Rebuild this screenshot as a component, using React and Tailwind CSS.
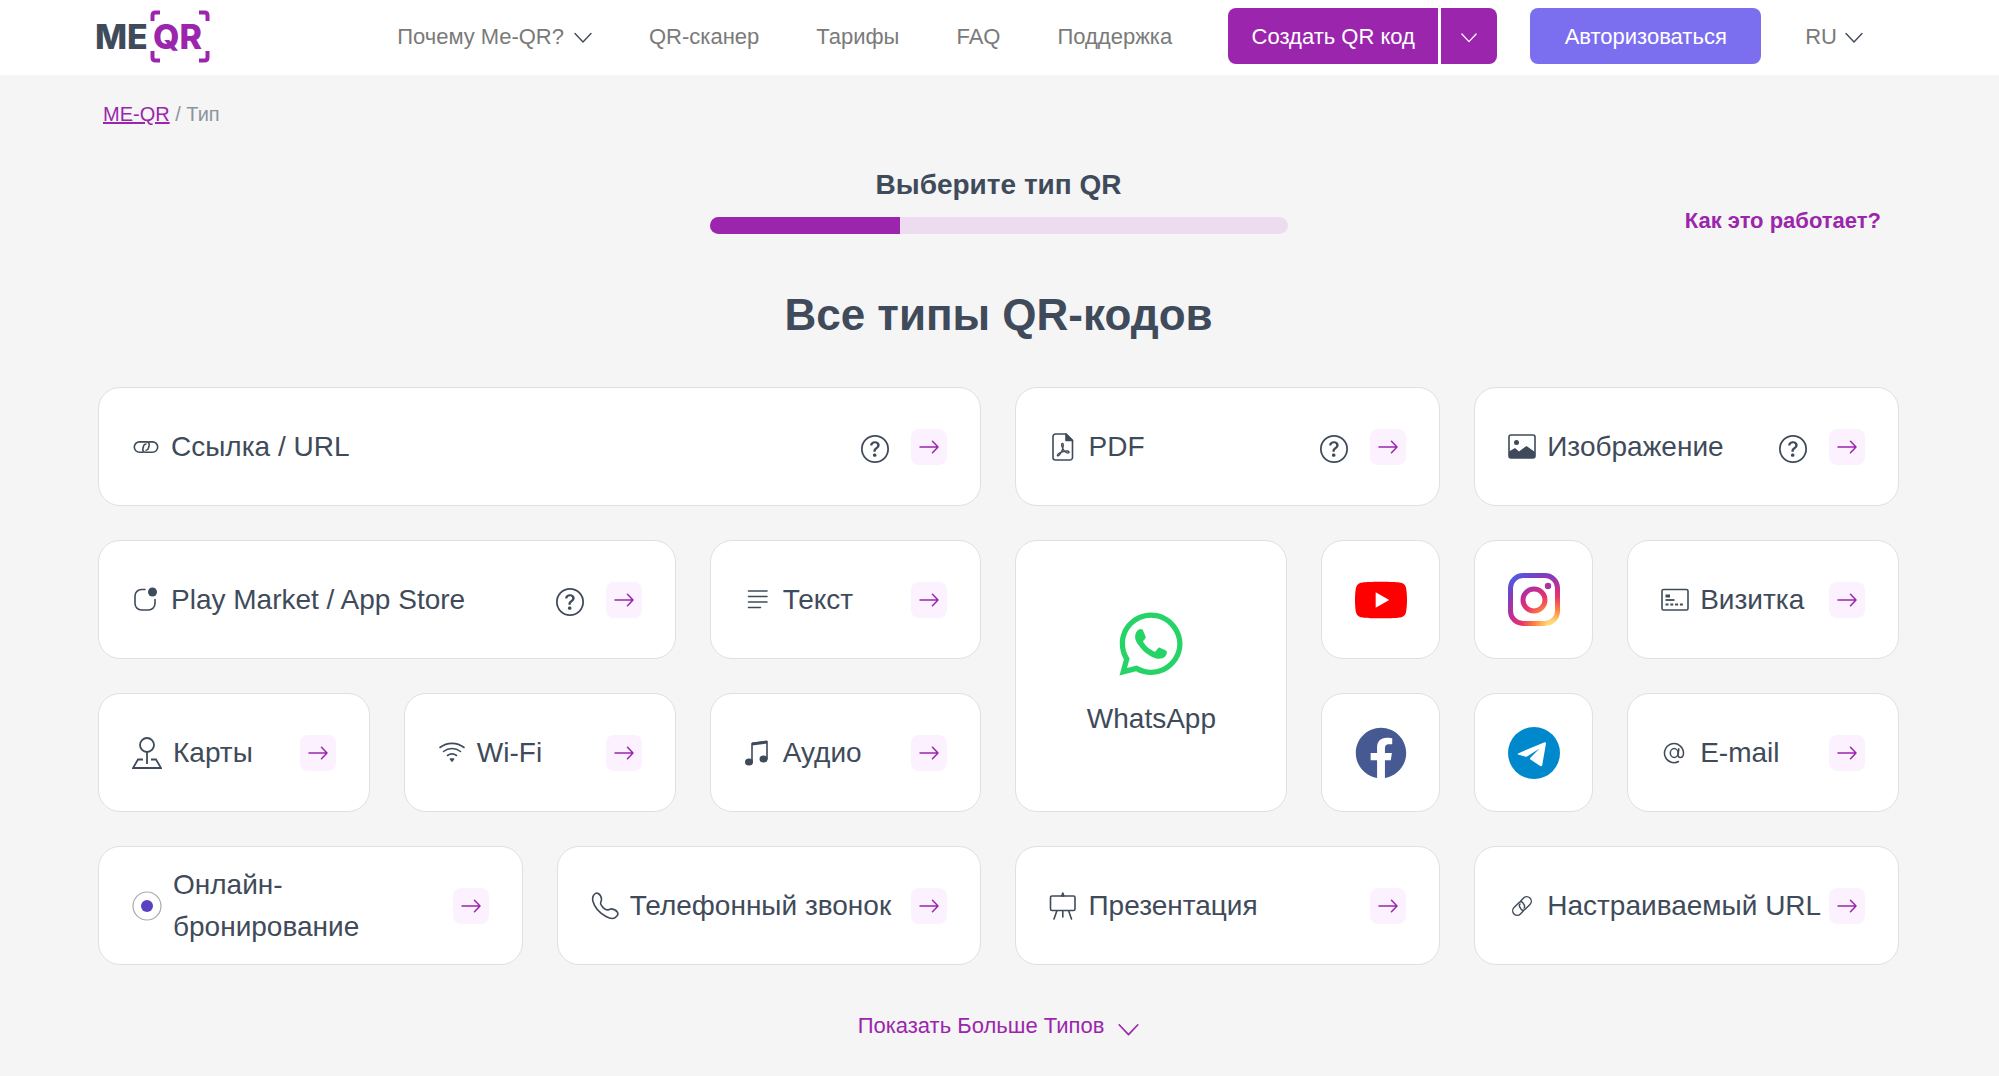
// ============================================================
// App.jsx
// QR type picker: header, progress step and the grid of types
// ============================================================
import React from 'react';
import { FaFacebook, FaWhatsapp } from 'react-icons/fa';
import { SiYoutube } from 'react-icons/si';
import { BsQuestionCircle } from 'react-icons/bs';

// ── Small icons ───────────────────────────────────────────────
const Icon = ({ children, className = 'w-7 h-7' }) => (
  <svg
    viewBox="0 0 28 28"
    fill="none"
    stroke="currentColor"
    strokeWidth="1.6"
    strokeLinecap="round"
    strokeLinejoin="round"
    aria-hidden="true"
    className={`${className} shrink-0`}
  >
    {children}
  </svg>
);

const Chevron = ({ className }) => (
  <svg viewBox="0 0 18 12" fill="none" stroke="currentColor" strokeWidth="1.4" aria-hidden="true" className={className}>
    <path d="M1 1.5l8 8.5 8-8.5" strokeLinecap="round" strokeLinejoin="round" />
  </svg>
);

const LinkIcon = () => (
  <Icon>
    <path d="M11 19.300H7.500a5.200 5.200 0 0 1 0-10.400h7c2.200 0 3 1.600 2.600 3.600l-.6 2.500c-.4 1.600-1.200 2.200-2.400 2.200" />
    <path d="M17 8.900h3.500a5.200 5.200 0 0 1 0 10.400h-7c-2.200 0-3-1.600-2.600-3.600l.6-2.500c.4-1.600 1.200-2.200 2.400-2.200" />
  </Icon>
);

const AppIcon = () => (
  <Icon>
    <path d="M13 3.500H9.500A6.500 6.500 0 0 0 3 10v7.500A6.500 6.500 0 0 0 9.500 24h7a6.500 6.500 0 0 0 6.500-6.500v-4" />
    <circle cx="20.5" cy="6" r="4.500" fill="currentColor" stroke="none" />
  </Icon>
);

const PdfIcon = () => (
  <Icon>
    <path d="M17 1H6.500A2.500 2.500 0 0 0 4 3.500v21A2.500 2.500 0 0 0 6.500 27H21a2.500 2.500 0 0 0 2.500-2.500v-17z" />
    <path d="M17 1v6.500h6.500z" fill="currentColor" />
    <path d="M13.500 10.500c-1.300 0-1.200 2 .2 4.700 1.200 2.300 3.500 4.800 5.300 4.800 1.500 0 1.500-1.900-.5-2-2.500-.1-6 .8-8.500 2.300-2.200 1.300-2 3.200-.6 2.400 1.600-1 3.600-4.500 4.400-7.500.6-2.300.8-4.700-.3-4.700z" strokeWidth="1.3" />
  </Icon>
);

const ImageIcon = () => (
  <Icon>
    <rect x="1" y="2" width="26" height="23" rx="2" />
    <circle cx="8.500" cy="9.500" r="2.500" fill="currentColor" stroke="none" />
    <path d="M1 18.500l6-3.500 4 3.500 7.500-5.500 8.500 6v4a2 2 0 0 1-2 2H3a2 2 0 0 1-2-2z" fill="currentColor" stroke="none" />
  </Icon>
);

const TextIcon = () => (
  <Icon>
    <path d="M4.500 5h18.500M4.500 10.500h18.500M4.500 16h18.500M4.500 21.500h12" />
  </Icon>
);

const CardIcon = () => (
  <Icon>
    <rect x="1" y="3.500" width="26" height="20.500" rx="1.5" />
    <path d="M4.500 10h4.500" strokeWidth="3" strokeLinecap="butt" />
    <path d="M4.500 14h9" strokeWidth="1.800" strokeLinecap="butt" />
    <path d="M4.500 18.500h19" strokeWidth="1.800" strokeDasharray="3 1.800" strokeLinecap="butt" />
  </Icon>
);

const MapIcon = () => (
  <svg viewBox="0 0 30 32" fill="none" stroke="currentColor" strokeWidth="1.8" aria-hidden="true" className="w-[30px] h-8 shrink-0">
    <circle cx="15" cy="8" r="7" />
    <path d="M15 15v12M11 22.500H6L1 31h28l-5-8.500h-5" />
  </svg>
);

const WifiIcon = () => (
  <Icon>
    <path d="M2 8.500c7-5.500 17-5.500 24 0M5.500 12.500c5-4 12-4 17 0M9.500 16.500c2.800-2 6.200-2 9 0" />
    <path d="M12.500 20h3l-1.500 2z" fill="currentColor" />
  </Icon>
);

const MusicIcon = () => (
  <Icon>
    <ellipse cx="5" cy="23" rx="4" ry="3.600" fill="currentColor" stroke="none" />
    <ellipse cx="19.500" cy="20" rx="4" ry="3.600" fill="currentColor" stroke="none" />
    <path d="M8 23V4.500l15-2V20" />
    <path d="M8 3.500l15-2v3l-15 2z" fill="currentColor" stroke="none" />
  </Icon>
);

const AtIcon = () => (
  <Icon>
    <path d="M17.500 22.500a9.500 9.500 0 1 1 5-8.500c0 3-1.400 4.500-3.200 4.500-1.600 0-2.400-1-2.200-2.700l.7-6" strokeWidth="1.5" />
    <ellipse cx="13.200" cy="14" rx="3.900" ry="4.400" strokeWidth="1.5" />
  </Icon>
);

const BookingIcon = () => (
  <svg viewBox="0 0 30 30" fill="none" aria-hidden="true" className="w-[30px] h-[30px] shrink-0">
    <circle cx="15" cy="15" r="14" stroke="#aaaaaa" strokeWidth="1.2" />
    <circle cx="15" cy="15" r="6" fill="#5b41c1" />
  </svg>
);

const PhoneIcon = () => (
  <Icon>
    <path d="M2.500 3.500C3.500 1.500 5.500.5 7.200 1.500c1.500.9 3.100 3.500 3.300 5.500.2 1.700-.9 2.600-.9 4.300 0 2.300 3.900 6.400 6.500 6.600 1.700.1 2.700-1.100 4.400-1 2.200.2 5 1.800 6 3.500.9 1.600-.3 3.900-2.300 5.300-2.500 1.700-5.800.7-9.200-1.200C8.500 20.900 3.500 15 2 9.500c-.6-2.200-.5-4.300.5-6z" />
  </Icon>
);

const BoardIcon = () => (
  <Icon>
    <path d="M3 4h21.500a1.500 1.500 0 0 1 1.500 1.500V17a1.500 1.500 0 0 1-1.500 1.500H3A1.500 1.500 0 0 1 1.500 17V5.500A1.500 1.500 0 0 1 3 4zM13.800 18.500V25M8 18.500l-3 8.500M19.500 18.500l3 8.500" />
    <path d="M12.800 4l1-3 1 3z" fill="currentColor" />
  </Icon>
);

const ChainIcon = () => (
  <Icon>
    <g transform="rotate(-45 14 14) translate(1.4 1.4) scale(.9)" strokeWidth="1.6">
      <path d="M11 19H6.500a5 5 0 0 1 0-10h8c2.200 0 3 1.600 2.600 3.600l-.6 2.300c-.4 1.600-1.200 2.200-2.400 2.200" />
      <path d="M17 9h4.500a5 5 0 0 1 0 10h-8c-2.200 0-3-1.600-2.600-3.600l.6-2.300c.4-1.600 1.200-2.200 2.400-2.200" />
    </g>
  </Icon>
);

// ── Brand logos ───────────────────────────────────────────────
const Logo = () => (
  <svg viewBox="0 0 116 54" role="img" aria-label="ME-QR" className="w-[116px] h-[54px]">
    <g fontFamily="Inter, sans-serif" fontWeight="800" fontSize="34">
      <text x="0" y="40" fill="#3f4b5a">ME</text>
      <text x="58" y="40" fill="#9b26ad">QR</text>
    </g>
    <path d="M57.500 12V6.500q0-3 3-3H65M104 3.500h5.500q3 0 3 3V12M57.500 42v6.500q0 3 3 3H65M104 51.500h5.500q3 0 3-3V42" fill="none" stroke="#9b26ad" strokeWidth="4" />
  </svg>
);

const InstagramLogo = () => (
  <svg viewBox="0 0 52 54" fill="none" role="img" aria-label="Instagram" className="w-[52px] h-[54px]">
    <defs>
      <radialGradient id="ig" gradientUnits="userSpaceOnUse" cx="44" cy="54" r="68">
        <stop offset="0.08" stopColor="#ffd879" />
        <stop offset="0.25" stopColor="#ff8a3c" />
        <stop offset="0.45" stopColor="#e8356a" />
        <stop offset="0.6" stopColor="#c32d92" />
        <stop offset="0.78" stopColor="#7a3fc0" />
        <stop offset="0.95" stopColor="#4a5fea" />
      </radialGradient>
    </defs>
    <rect x="2.500" y="2.500" width="47" height="48" rx="12.500" stroke="url(#ig)" strokeWidth="5" />
    <circle cx="26" cy="27" r="11" stroke="url(#ig)" strokeWidth="5" />
    <circle cx="40" cy="13" r="3.200" fill="#a836a0" />
  </svg>
);

const TelegramLogo = () => (
  <svg viewBox="0 0 52 52" role="img" aria-label="Telegram" className="w-[52px] h-[52px]">
    <circle cx="26" cy="26" r="26" fill="#0088cc" />
    <path d="M10.500 26.200L36 15.400c1.300-.5 2.100.2 1.900 1.600l-3.600 20.700c-.3 1.500-1.300 1.900-2.500 1.100l-9.300-6.300c-.7-.5-.7-1.100-.1-1.700l9.100-9.300-12 7.800c-.8.5-1.600.5-2.500.2l-6.300-1.800c-1.200-.4-1.200-1.100-.2-1.500z" fill="#fff" />
  </svg>
);

// ── Data ──────────────────────────────────────────────────────
const TYPES = [
  { label: 'Ссылка / URL', icon: LinkIcon, span: 'col-span-6', help: true },
  { label: 'PDF', icon: PdfIcon, span: 'col-span-3', help: true },
  { label: 'Изображение', icon: ImageIcon, span: 'col-span-3', help: true },
  { label: 'Play Market / App Store', icon: AppIcon, span: 'col-span-4', help: true },
  { label: 'Текст', icon: TextIcon, span: 'col-span-2' },
  { label: 'WhatsApp', tall: true, span: 'col-span-2 row-span-2' },
  { label: 'YouTube', brand: <SiYoutube className="w-[52px] h-[52px] text-[#ff0000]" />, span: 'col-span-1' },
  { label: 'Instagram', brand: <InstagramLogo />, span: 'col-span-1' },
  { label: 'Визитка', icon: CardIcon, span: 'col-span-2' },
  { label: 'Карты', icon: MapIcon, span: 'col-span-2' },
  { label: 'Wi-Fi', icon: WifiIcon, span: 'col-span-2' },
  { label: 'Аудио', icon: MusicIcon, span: 'col-span-2' },
  { label: 'Facebook', brand: <FaFacebook className="w-[52px] h-[52px] text-[#475993]" />, span: 'col-span-1' },
  { label: 'Telegram', brand: <TelegramLogo />, span: 'col-span-1' },
  { label: 'E-mail', icon: AtIcon, span: 'col-span-2' },
  { label: 'Онлайн-\nбронирование', icon: BookingIcon, span: 'col-span-3' },
  { label: 'Телефонный звонок', icon: PhoneIcon, span: 'col-span-3' },
  { label: 'Презентация', icon: BoardIcon, span: 'col-span-3' },
  { label: 'Настраиваемый URL', icon: ChainIcon, span: 'col-span-3' },
];

const NAV = ['QR-сканер', 'Тарифы', 'FAQ', 'Поддержка'];

function TypeCard({ label, icon: TypeIcon, brand, tall, help, span }) {
  const base = `${span} bg-white border border-[#dfe0e5] rounded-[22px]`;

  if (brand) {
    return (
      <a href="#" aria-label={label} className={`${base} flex items-center justify-center`}>
        {brand}
      </a>
    );
  }

  if (tall) {
    return (
      <a href="#" className={`${base} flex flex-col items-center justify-center gap-[18px] pb-1`}>
        <FaWhatsapp className="w-[72px] h-[72px] text-[#25d366]" />
        {label}
      </a>
    );
  }

  return (
    <div className={`${base} flex items-center px-[33px]`}>
      <a href="#" className="flex flex-1 items-center gap-[11px] whitespace-pre">
        <TypeIcon />
        {label}
      </a>
      {help && (
        <button type="button" aria-label="Подсказка" className="mr-[22px] pt-1">
          <BsQuestionCircle className="w-7 h-7" />
        </button>
      )}
      <a href="#" aria-label={label} className="flex items-center justify-center w-9 h-9 shrink-0 rounded-lg bg-[#fcf1ff] text-[#9b26ad]">
        <svg viewBox="0 0 20 14" fill="none" stroke="currentColor" strokeWidth="1.5" strokeLinecap="round" strokeLinejoin="round" aria-hidden="true" className="w-5 h-3.5">
          <path d="M1 7h18M13.500 1.200L19 7l-5.500 5.800" />
        </svg>
      </a>
    </div>
  );
}

export default function App() {
  return (
    <div className="min-h-screen bg-[#f5f5f5] text-[#3f4b5a] font-['Liberation_Sans',Arial,sans-serif]">

      {/* ── Header ──────────────────────────────────────── */}
      <header className="flex items-center justify-between pt-2 pb-[11px] pl-[95px] pr-[136px] bg-white text-[22px] text-[#7a7a7a]">
        <a href="#"><Logo /></a>
        <nav className="flex items-center">
          <div className="flex items-center gap-[57px] mr-14">
            <button type="button" className="flex items-center gap-2.5">
              Почему Me-QR?
              <Chevron className="w-[18px] h-3 mt-1 text-[#3f4b5a]" />
            </button>
            {NAV.map((item) => (
              <a key={item} href="#">{item}</a>
            ))}
          </div>
          <div className="flex gap-[3px] mr-[33px] text-white">
            <a href="#" className="flex items-center justify-center w-[210px] h-14 rounded-l-lg bg-[#9b26ad]">
              Создать QR код
            </a>
            <button type="button" aria-label="Другие типы" className="flex items-center justify-center w-14 h-14 rounded-r-lg bg-[#9b26ad]">
              <Chevron className="w-4 h-3 mt-1" />
            </button>
          </div>
          <a href="#" className="flex items-center justify-center w-[231px] h-14 mr-11 rounded-lg bg-[#7c6fef] text-white">
            Авторизоваться
          </a>
          <button type="button" className="flex items-center gap-2">
            RU
            <Chevron className="w-[18px] h-3 mt-1 text-[#3f4b5a]" />
          </button>
        </nav>
      </header>

      <main className="pl-[98px] pr-[100px] pt-6 pb-6">
        <p className="pl-[5px] text-[20px] leading-[30px] text-[#8b949c]">
          <a href="#" className="text-[#9b26ad] underline">ME-QR</a> / Тип
        </p>

        {/* ── Progress ──────────────────────────────────── */}
        <div className="grid grid-cols-[1fr_578px_1fr] items-end mt-[35px]">
          <div className="col-start-2">
            <h2 className="text-[28px] leading-[42px] font-bold text-center">Выберите тип QR</h2>
            <div className="h-[17px] mt-[11px] rounded-full overflow-hidden bg-[#eddcef]">
              <div className="w-[33%] h-full bg-[#9b26ad]" />
            </div>
          </div>
          <a href="#" className="justify-self-end mr-[18px] text-[22px] leading-[26px] font-bold text-[#9b26ad]">
            Как это работает?
          </a>
        </div>

        <h1 className="mt-[53px] text-[44px] leading-[56px] font-bold text-center">Все типы QR-кодов</h1>

        {/* ── Types grid ────────────────────────────────── */}
        <div className="grid grid-cols-12 auto-rows-[119px] gap-[34px] mt-11 text-[28px] leading-[42px]">
          {TYPES.map((type) => (
            <TypeCard key={type.label} {...type} />
          ))}
        </div>

        <button type="button" className="flex items-center gap-3.5 mx-auto mt-11 text-[22px] leading-[33px] text-[#9b26ad]">
          Показать Больше Типов
          <Chevron className="w-[21px] h-3.5 mt-2" />
        </button>
      </main>

    </div>
  );
}
